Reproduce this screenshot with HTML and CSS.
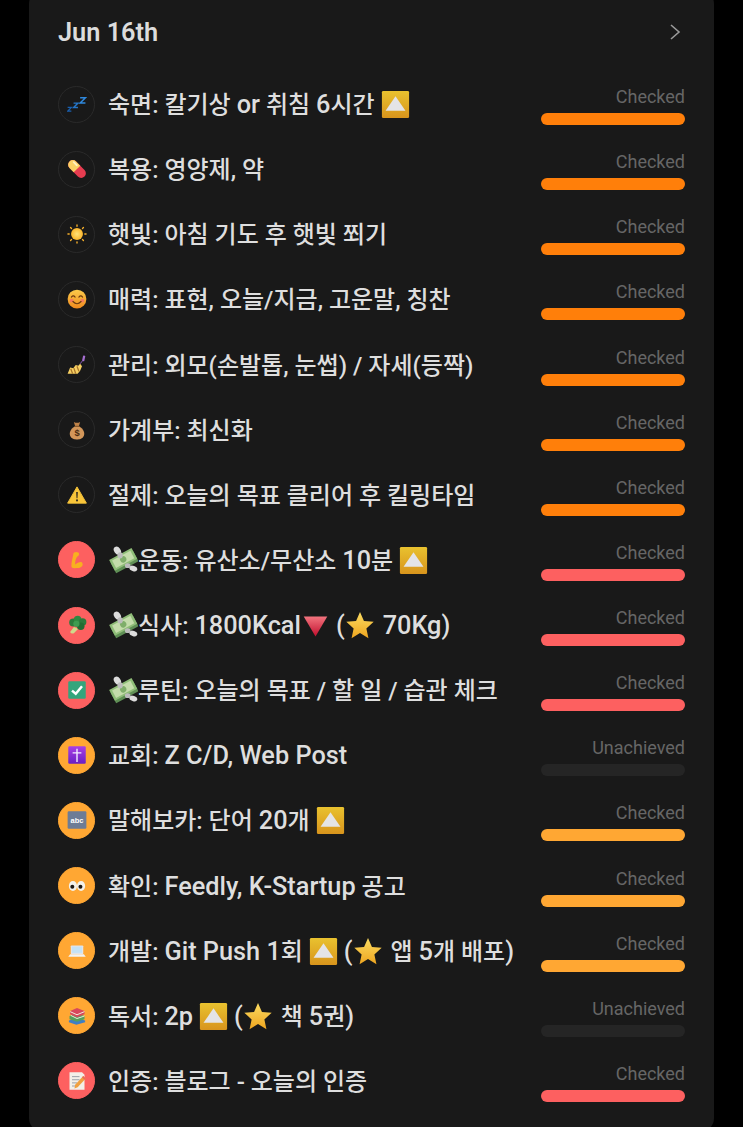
FILE: index.html
```html
<!DOCTYPE html>
<html lang="ko">
<head>
  <meta charset="UTF-8" />
  <title>Jun 16th</title>
  <link rel="stylesheet" href="styles.css">
</head>
<body>

  <!-- emoji set, reused below with <use> -->
  <svg class="defs" xmlns="http://www.w3.org/2000/svg">
    <defs>
      <linearGradient id="g-gold" x1="0" y1="0" x2="0" y2="1"><stop offset="0" stop-color="#e9c22f"/><stop offset="1" stop-color="#d8941c"/></linearGradient>
      <linearGradient id="g-red" x1="0" y1="0" x2="0" y2="1"><stop offset="0" stop-color="#f2747e"/><stop offset="1" stop-color="#c20f2e"/></linearGradient>
      <linearGradient id="g-star" x1="0" y1="0" x2="0" y2="1"><stop offset="0" stop-color="#fbdc62"/><stop offset="1" stop-color="#eea51f"/></linearGradient>
      <linearGradient id="g-face" x1="0" y1="0" x2="0" y2="1"><stop offset="0" stop-color="#fbcb4b"/><stop offset="1" stop-color="#ef8a1e"/></linearGradient>
      <linearGradient id="g-purple" x1="0" y1="0" x2="0" y2="1"><stop offset="0" stop-color="#a93fe6"/><stop offset="1" stop-color="#6a1fc4"/></linearGradient>
      <radialGradient id="g-sun"><stop offset="0" stop-color="#ffe27a"/><stop offset="1" stop-color="#fbb52a"/></radialGradient>
    </defs>
    <symbol id="i-up" viewBox="0 0 32 32">
      <rect x="1" y="1" width="30" height="30" rx="1.5" fill="url(#g-gold)"/>
      <path d="M16 7 L27 23 H5 Z" fill="#e4e4e6"/>
    </symbol>
    <symbol id="i-down" viewBox="0 0 32 32">
      <path d="M3 6 H29 L16 28 Z" fill="url(#g-red)"/>
    </symbol>
    <symbol id="i-star" viewBox="0 0 32 32">
      <path d="M16 2 L20.2 11.6 L30.6 12.6 L22.8 19.6 L25 30 L16 24.6 L7 30 L9.2 19.6 L1.4 12.6 L11.8 11.6 Z" fill="url(#g-star)"/>
    </symbol>
    <symbol id="i-money" viewBox="0 0 32 32">
      <g transform="rotate(-28 16 16)">
        <rect x="3" y="12" width="27" height="13" fill="#5f8f55"/>
        <rect x="3" y="9" width="27" height="13" fill="#8fbd78"/>
        <rect x="5.5" y="11" width="22" height="9" fill="#c4dcab"/>
        <circle cx="16.5" cy="15.5" r="3.4" fill="#7fae6a"/>
      </g>
      <ellipse cx="10" cy="6" rx="3.4" ry="4.6" transform="rotate(-35 10 6)" fill="#dcdcdc"/>
      <ellipse cx="13" cy="11" rx="2.8" ry="3.4" fill="#bcbcbc"/>
      <ellipse cx="27" cy="25" rx="4.4" ry="2.8" transform="rotate(20 27 25)" fill="#dcdcdc"/>
      <ellipse cx="21" cy="22" rx="3" ry="2.6" fill="#bcbcbc"/>
    </symbol>
    <symbol id="i-zzz" viewBox="0 0 32 32">
      <path d="M1 21.5 H7 L1 27.5 H7" fill="none" stroke="#1a5fae" stroke-width="2"/>
      <path d="M10.5 14.5 H17.5 L10.5 21.5 H17.5" fill="none" stroke="#2576c8" stroke-width="2.2"/>
      <path d="M21 6 H29.5 L21 14.5 H29.5" fill="none" stroke="#2f88dc" stroke-width="2.4"/>
    </symbol>
    <symbol id="i-pill" viewBox="0 0 32 32">
      <g transform="rotate(45 16 16)">
        <rect x="-1" y="8.5" width="34" height="15" rx="7.5" fill="#e63c50"/>
        <path d="M16 8.5 H6.5 A7.5 7.5 0 0 0 6.5 23.5 H16 Z" fill="#fbd065"/>
        <rect x="3" y="10.5" width="10" height="3" rx="1.5" fill="#fff0c0"/>
      </g>
    </symbol>
    <symbol id="i-sun" viewBox="0 0 32 32">
      <circle cx="16" cy="16" r="9.5" fill="url(#g-sun)"/>
      <g stroke="#f2ad2a" stroke-width="2.2" stroke-linecap="round">
        <path d="M16 1.5 V3.5 M16 28.5 V30.5 M1.5 16 H3.5 M28.5 16 H30.5 M5.7 5.7 L7.2 7.2 M24.8 24.8 L26.3 26.3 M5.7 26.3 L7.2 24.8 M24.8 7.2 L26.3 5.7"/>
      </g>
    </symbol>
    <symbol id="i-smile" viewBox="0 0 32 32">
      <circle cx="16" cy="16" r="15" fill="url(#g-face)"/>
      <circle cx="7.5" cy="18.5" r="3" fill="#f2795e"/>
      <circle cx="24.5" cy="18.5" r="3" fill="#f2795e"/>
      <path d="M7 13 Q10 9 13 13 M19 13 Q22 9 25 13" fill="none" stroke="#6b3a10" stroke-width="1.8" stroke-linecap="round"/>
      <path d="M9.5 20 Q16 27 22.5 20" fill="none" stroke="#6b3a10" stroke-width="1.8" stroke-linecap="round"/>
    </symbol>
    <symbol id="i-nails" viewBox="0 0 32 32">
      <path d="M1 30 L5 20 L10 21 L14 16 L18 17 L21 14 L24 18 L21 25 L17 30 Z" fill="#f6cf62"/>
      <path d="M6 22 L9 30 M11 21 L14 30 M16 18 L19 26" stroke="#a8742c" stroke-width="2"/>
      <path d="M21 14 L25 9" stroke="#8e5bb8" stroke-width="1.6"/>
      <rect x="25" y="1" width="3.6" height="9" rx="1" transform="rotate(12 27 5)" fill="#a56fd0"/>
    </symbol>
    <symbol id="i-warn" viewBox="0 0 32 32">
      <path d="M16 3 L31 29 H1 Z" fill="#f9c53a" stroke="#f9c53a" stroke-width="1.5" stroke-linejoin="round"/>
      <path d="M14.6 11 H17.4 L16.8 21 H15.2 Z" fill="#3a3020"/>
      <circle cx="16" cy="24.6" r="1.7" fill="#3a3020"/>
    </symbol>
    <symbol id="i-arm" viewBox="0 0 32 32">
      <path d="M15 3 C12 3 10 4 10 7 C9 13 7 19 7 25 C7 28 9 29 12 29 C17 29 22 29 24 26 C26 23 25 19 22 19 C19 19 16 21 13 23 C13 18 14 13 17 10 C20 9 20 5 18 4 Z" fill="#f8b01f"/>
    </symbol>
    <symbol id="i-broc" viewBox="0 0 32 32">
      <path d="M11 19 L5 27 Q7 31 11 29 L18 22 Z" fill="#d0d98a"/>
      <circle cx="10" cy="12" r="6.5" fill="#2c7a3c"/>
      <circle cx="17" cy="7" r="6" fill="#2f8a42"/>
      <circle cx="25" cy="11" r="6" fill="#2c7a3c"/>
      <circle cx="22" cy="18" r="6" fill="#246c33"/>
      <circle cx="15" cy="14" r="5" fill="#3d9c50"/>
    </symbol>
    <symbol id="i-check" viewBox="0 0 32 32">
      <rect x="2" y="2" width="28" height="28" rx="2" fill="#34a57c"/>
      <path d="M8 17 L14 22 L24 10" fill="none" stroke="#fff" stroke-width="4"/>
    </symbol>
    <symbol id="i-cross" viewBox="0 0 32 32">
      <rect x="2" y="2" width="28" height="28" rx="2" fill="url(#g-purple)"/>
      <path d="M16 6 V27 M9 12.5 H23" stroke="#f4ecff" stroke-width="2.2"/>
    </symbol>
    <symbol id="i-eyes" viewBox="0 0 32 32">
      <ellipse cx="9.5" cy="16" rx="6.5" ry="8" fill="#f4f1ea"/>
      <ellipse cx="22.5" cy="16" rx="6.5" ry="8" fill="#f4f1ea"/>
      <circle cx="8.5" cy="17" r="3.2" fill="#1d1712"/>
      <circle cx="21.5" cy="17" r="3.2" fill="#1d1712"/>
    </symbol>
    <symbol id="i-laptop" viewBox="0 0 32 32">
      <rect x="6" y="7" width="20" height="14" rx="1.5" fill="#e2e4e8"/>
      <rect x="8" y="9" width="16" height="10" fill="#c4e2f6"/>
      <path d="M5 21 H27 L30 25 H2 Z" fill="#f2f3f4"/>
    </symbol>
    <symbol id="i-books" viewBox="0 0 32 32">
      <path d="M3 23 L15 19 L29 23 L29 26 L15 30 L3 26 Z" fill="#3f7fc4"/>
      <path d="M4 16 L16 12 L28 16 L28 21 L16 25 L4 21 Z" fill="#55a05c"/>
      <path d="M6 15 L16 20 L28 16" fill="none" stroke="#e8e8d8" stroke-width="1.6"/>
      <path d="M5 8 L16 3 L28 8 L28 13 L16 18 L5 13 Z" fill="#d8485c"/>
      <path d="M5 9 L16 14 L28 9" fill="none" stroke="#f2e8d8" stroke-width="1.6"/>
    </symbol>
    <symbol id="i-memo" viewBox="0 0 32 32">
      <path d="M4 2 H24 L28 6 V30 H4 Z" fill="#f3efe8"/>
      <path d="M8 9 H20 M8 14 H20 M8 19 H16 M8 24 H14" stroke="#9aa0a8" stroke-width="1.6"/>
      <path d="M26 8 L30 12 L17 26 L12 28 L13 22 Z" fill="#f0a040"/>
      <path d="M26 8 L30 12 L28 14 L24 10 Z" fill="#e8685c"/>
    </symbol>
  </svg>

  <div class="card">
    <div class="head">
      <div class="head-date">Jun 16th</div>
      <svg class="head-arrow" viewBox="0 0 12 18"><path d="M2 2 L10 9 L2 16" fill="none" stroke="#9a9a9a" stroke-width="1.6"/></svg>
    </div>

    <div class="row">
      <div class="badge"><svg class="badge-ico"><use href="#i-zzz"/></svg></div>
      <div class="name">숙면: 칼기상 <span class="lat">or</span> 취침 <span class="lat">6</span>시간 <svg class="emo"><use href="#i-up"/></svg></div>
      <div class="stat"><div class="stat-label">Checked</div><div class="bar bar-orange"></div></div>
    </div>
    <div class="row">
      <div class="badge"><svg class="badge-ico"><use href="#i-pill"/></svg></div>
      <div class="name">복용: 영양제, 약</div>
      <div class="stat"><div class="stat-label">Checked</div><div class="bar bar-orange"></div></div>
    </div>
    <div class="row">
      <div class="badge"><svg class="badge-ico"><use href="#i-sun"/></svg></div>
      <div class="name">햇빛: 아침 기도 후 햇빛 쬐기</div>
      <div class="stat"><div class="stat-label">Checked</div><div class="bar bar-orange"></div></div>
    </div>
    <div class="row">
      <div class="badge"><svg class="badge-ico"><use href="#i-smile"/></svg></div>
      <div class="name">매력: 표현, 오늘/지금, 고운말, 칭찬</div>
      <div class="stat"><div class="stat-label">Checked</div><div class="bar bar-orange"></div></div>
    </div>
    <div class="row">
      <div class="badge"><svg class="badge-ico"><use href="#i-nails"/></svg></div>
      <div class="name">관리: 외모(손발톱, 눈썹) / 자세(등짝)</div>
      <div class="stat"><div class="stat-label">Checked</div><div class="bar bar-orange"></div></div>
    </div>
    <div class="row">
      <div class="badge">
        <svg class="badge-ico" viewBox="0 0 32 32">
          <path d="M11 3 Q16 6 21 3 L19 10 H13 Z" fill="#c08348"/>
          <path d="M13 10 H19 C26 14 29 20 27 25 C25 30 20 31 16 31 C12 31 7 30 5 25 C3 20 6 14 13 10 Z" fill="#d3975a"/>
          <rect x="12" y="9" width="8" height="2" rx="1" fill="#8a5a2c"/>
          <text x="16" y="26" text-anchor="middle" class="bag-sign">$</text>
        </svg>
      </div>
      <div class="name">가계부: 최신화</div>
      <div class="stat"><div class="stat-label">Checked</div><div class="bar bar-orange"></div></div>
    </div>
    <div class="row">
      <div class="badge"><svg class="badge-ico"><use href="#i-warn"/></svg></div>
      <div class="name">절제: 오늘의 목표 클리어 후 킬링타임</div>
      <div class="stat"><div class="stat-label">Checked</div><div class="bar bar-orange"></div></div>
    </div>
    <div class="row">
      <div class="badge badge-red"><svg class="badge-ico"><use href="#i-arm"/></svg></div>
      <div class="name"><svg class="emo emo-money"><use href="#i-money"/></svg>운동: 유산소/무산소 <span class="lat">10</span>분 <svg class="emo"><use href="#i-up"/></svg></div>
      <div class="stat"><div class="stat-label">Checked</div><div class="bar bar-red"></div></div>
    </div>
    <div class="row">
      <div class="badge badge-red"><svg class="badge-ico"><use href="#i-broc"/></svg></div>
      <div class="name"><svg class="emo emo-money"><use href="#i-money"/></svg>식사: <span class="lat">1800Kcal</span><svg class="emo emo-down"><use href="#i-down"/></svg> <span class="lat">(</span><svg class="emo emo-star"><use href="#i-star"/></svg> <span class="lat">70Kg)</span></div>
      <div class="stat"><div class="stat-label">Checked</div><div class="bar bar-red"></div></div>
    </div>
    <div class="row">
      <div class="badge badge-red"><svg class="badge-ico"><use href="#i-check"/></svg></div>
      <div class="name"><svg class="emo emo-money"><use href="#i-money"/></svg>루틴: 오늘의 목표 / 할 일 / 습관 체크</div>
      <div class="stat"><div class="stat-label">Checked</div><div class="bar bar-red"></div></div>
    </div>
    <div class="row">
      <div class="badge badge-amber"><svg class="badge-ico"><use href="#i-cross"/></svg></div>
      <div class="name">교회: <span class="lat">Z C/D, Web Post</span></div>
      <div class="stat"><div class="stat-label">Unachieved</div><div class="bar"></div></div>
    </div>
    <div class="row">
      <div class="badge badge-amber">
        <svg class="badge-ico" viewBox="0 0 32 32">
          <rect x="1" y="2" width="30" height="28" rx="2" fill="#6d7c96"/>
          <text x="16" y="20" text-anchor="middle" class="abc-sign">abc</text>
        </svg>
      </div>
      <div class="name">말해보카: 단어 <span class="lat">20</span>개 <svg class="emo"><use href="#i-up"/></svg></div>
      <div class="stat"><div class="stat-label">Checked</div><div class="bar bar-amber"></div></div>
    </div>
    <div class="row">
      <div class="badge badge-amber"><svg class="badge-ico"><use href="#i-eyes"/></svg></div>
      <div class="name">확인: <span class="lat">Feedly, K-Startup</span> 공고</div>
      <div class="stat"><div class="stat-label">Checked</div><div class="bar bar-amber"></div></div>
    </div>
    <div class="row">
      <div class="badge badge-amber"><svg class="badge-ico"><use href="#i-laptop"/></svg></div>
      <div class="name">개발: <span class="lat">Git Push 1</span>회 <svg class="emo"><use href="#i-up"/></svg> <span class="lat">(</span><svg class="emo emo-star"><use href="#i-star"/></svg> 앱 <span class="lat">5</span>개 배포<span class="lat">)</span></div>
      <div class="stat"><div class="stat-label">Checked</div><div class="bar bar-amber"></div></div>
    </div>
    <div class="row">
      <div class="badge badge-amber"><svg class="badge-ico"><use href="#i-books"/></svg></div>
      <div class="name">독서: <span class="lat">2p</span> <svg class="emo"><use href="#i-up"/></svg> <span class="lat">(</span><svg class="emo emo-star"><use href="#i-star"/></svg> 책 <span class="lat">5</span>권<span class="lat">)</span></div>
      <div class="stat"><div class="stat-label">Unachieved</div><div class="bar"></div></div>
    </div>
    <div class="row">
      <div class="badge badge-red"><svg class="badge-ico"><use href="#i-memo"/></svg></div>
      <div class="name">인증: 블로그 - 오늘의 인증</div>
      <div class="stat"><div class="stat-label">Checked</div><div class="bar bar-red"></div></div>
    </div>
  </div>

</body>
</html>
```

FILE: styles.css
```css
html, body {
  height: 1127px;
  overflow: hidden;
}

body {
  font-family: Roboto, 'Noto Sans CJK KR', sans-serif;
  background: #000;
  margin: 0;
}

.defs {
  position: absolute;
  width: 0;
  height: 0;
}

.card {
  background: #191919;
  margin: -10px 29px 0;
  padding: 0 29px 18px;
  border-radius: 14px;
}

.head {
  height: 81.5px;
  padding-top: 2.5px;
  box-sizing: border-box;
  display: flex;
  align-items: center;
  justify-content: space-between;
}

.head-date {
  color: #dcdcdc;
  font-size: 25.3px;
  font-weight: 600;
}

.head-arrow {
  width: 12px;
  height: 18px;
  margin-right: 4px;
}

.row {
  height: 65.13px;
  display: flex;
  align-items: center;
}

.badge {
  width: 37px;
  height: 37px;
  box-sizing: border-box;
  border: 1px solid #2a2a2a;
  border-radius: 50%;
  flex: none;
  display: flex;
  align-items: center;
  justify-content: center;
  margin-right: 13px;
}

.badge-red {
  background: #fd6060;
  border-color: #fd6060;
}

.badge-amber {
  background: #ffa733;
  border-color: #ffa733;
}

.badge-ico {
  width: 20px;
  height: 20px;
}

.name {
  flex: 1;
  color: #dedede;
  font-size: 24px;
  font-weight: 500;
  white-space: nowrap;
  padding-bottom: 3px;
}

.lat {
  font-size: 25.3px;
}

.emo {
  width: 29px;
  height: 29px;
  vertical-align: -6px;
}

.emo-money {
  width: 30px;
  height: 30px;
}

.emo-down {
  width: 29px;
  height: 29px;
}

.emo-star {
  width: 30px;
  height: 30px;
  margin-right: 2px;
}

.stat {
  width: 144px;
  flex: none;
  padding-top: 4px;
  text-align: right;
}

.stat-label {
  color: #666;
  font-size: 18px;
  line-height: 20px;
  margin-bottom: 6px;
}

.bar {
  height: 12px;
  border-radius: 6px;
  background: #252525;
}

.bar-orange {
  background: #ff7f0a;
}

.bar-red {
  background: #fd6060;
}

.bar-amber {
  background: #ffa733;
}

.bag-sign {
  font-family: 'Liberation Sans', sans-serif;
  font-size: 15px;
  font-weight: bold;
  fill: #4a2c10;
}

.abc-sign {
  font-family: 'Liberation Sans', sans-serif;
  font-size: 12px;
  font-weight: bold;
  fill: #fff;
}
```
